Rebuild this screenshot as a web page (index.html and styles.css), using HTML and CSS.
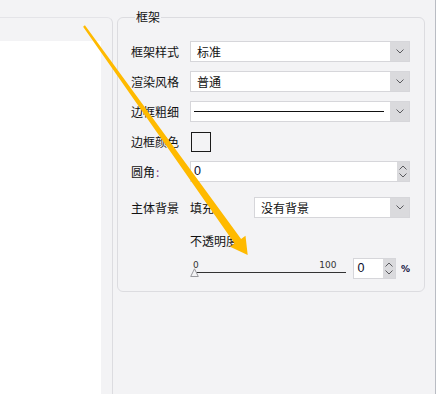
FILE: index.html
```html
<!DOCTYPE html>
<html lang="zh">
<head>
<meta charset="utf-8">
<title>框架</title>
<link rel="stylesheet" href="styles.css">
</head>
<body>
<div class="app">
  <div class="left-pane"><div class="left-white"></div></div>
  <div class="right-pane">
    <fieldset class="group">
      <legend class="group-title">框架</legend>
      <div class="row">
        <span class="lbl">框架样式</span>
        <div class="select wide"><span class="val">标准</span><span class="drop"><svg class="chev" width="8" height="5" viewBox="0 0 8 5"><polyline points="0.5,0.5 4,4 7.5,0.5"/></svg></span></div>
      </div>
      <div class="row gap9">
        <span class="lbl">渲染风格</span>
        <div class="select wide"><span class="val">普通</span><span class="drop"><svg class="chev" width="8" height="5" viewBox="0 0 8 5"><polyline points="0.5,0.5 4,4 7.5,0.5"/></svg></span></div>
      </div>
      <div class="row gap9">
        <span class="lbl">边框粗细</span>
        <div class="select wide"><span class="val line-val"><span class="line-sample"></span></span><span class="drop"><svg class="chev" width="8" height="5" viewBox="0 0 8 5"><polyline points="0.5,0.5 4,4 7.5,0.5"/></svg></span></div>
      </div>
      <div class="row gap9">
        <span class="lbl">边框颜色</span>
        <span class="swatch"></span>
      </div>
      <div class="row gap9">
        <span class="lbl">圆角<span class="colon">:</span></span>
        <div class="spin wide"><span class="val num">0</span><span class="spin-btns"><svg class="chev" width="8" height="5" viewBox="0 0 8 5"><polyline points="0.5,4.5 4,1 7.5,4.5"/></svg><svg class="chev" width="8" height="5" viewBox="0 0 8 5"><polyline points="0.5,0.5 4,4 7.5,0.5"/></svg></span></div>
      </div>
      <div class="row gap15">
        <span class="lbl">主体背景</span>
        <span class="sub-lbl">填充</span>
        <div class="select narrow"><span class="val">没有背景</span><span class="drop"><svg class="chev" width="8" height="5" viewBox="0 0 8 5"><polyline points="0.5,0.5 4,4 7.5,0.5"/></svg></span></div>
      </div>
      <div class="opacity-title">不透明度</div>
      <div class="slider-row">
        <div class="slider">
          <div class="ticks"><span>0</span><span>100</span></div>
          <div class="track"></div>
          <svg class="handle" width="9" height="9" viewBox="0 0 9 9"><polygon points="4.5,0.8 8.3,8.5 0.7,8.5"/></svg>
        </div>
        <div class="spin small"><span class="val num">0</span><span class="spin-btns"><svg class="chev" width="8" height="5" viewBox="0 0 8 5"><polyline points="0.5,4.5 4,1 7.5,4.5"/></svg><svg class="chev" width="8" height="5" viewBox="0 0 8 5"><polyline points="0.5,0.5 4,4 7.5,0.5"/></svg></span></div>
        <span class="pct">%</span>
      </div>
    </fieldset>
  </div>
  <div class="edge"></div>
</div>
<svg class="arrow" width="436" height="394" viewBox="0 0 436 394">
  <polygon points="84.9,25.3 241.1,238.9 245.5,235.7 247.7,255 230.1,246.7 234.6,243.5 83.1,26.7"/>
</svg>
</body>
</html>
```

FILE: styles.css
```css
* { box-sizing: border-box; }
html, body { margin: 0; padding: 0; }
body {
  width: 436px;
  height: 394px;
  overflow: hidden;
  background: #f3f3f5;
  font-family: "Noto Sans CJK SC", "Noto Sans", sans-serif;
  font-size: 12px;
  color: #111;
  position: relative;
}
.app {
  display: flex;
  height: 394px;
}
.left-pane {
  width: 113px;
  margin-top: 17px;
  border-top: 1px solid #e4e4e8;
  border-right: 1px solid #dcdce0;
  border-top-right-radius: 6px;
  padding-top: 23px;
  display: flex;
  flex-direction: column;
}
.left-white {
  width: 101px;
  flex: 1;
  background: #ffffff;
}
.right-pane {
  width: 322px;
  padding-left: 4px;
}
.edge {
  width: 1px;
  background: #b9bcc3;
}
.group {
  width: 308px;
  margin: 8px 0 0 0;
  padding: 15px 14px 12px 13px;
  border: 1px solid #dcdce0;
  border-radius: 6px;
  min-width: 0;
}
.group-title {
  margin-left: 4px;
  padding: 0 1px;
  line-height: 18px;
  font-size: 12px;
  color: #111;
}
.row {
  display: flex;
  align-items: center;
  height: 21px;
}
.gap9 { margin-top: 9px; }
.gap15 { margin-top: 15px; }
.lbl {
  width: 59px;
  flex: none;
  line-height: 21px;
  white-space: nowrap;
}
.colon { color: #8b3f8b; margin-left: 1px; }
.sub-lbl {
  width: 64px;
  flex: none;
  line-height: 21px;
}
.select, .spin {
  display: flex;
  height: 21px;
  background: #fff;
  border: 1px solid #d6d6da;
}
.wide { width: 220px; }
.narrow { width: 156px; }
.val {
  flex: 1;
  padding-left: 6px;
  line-height: 19px;
  white-space: nowrap;
}
.num {
  padding-left: 3px;
  font-family: "Liberation Sans", Arial, sans-serif;
  font-size: 12.5px;
  color: #0b0b2a;
}
.line-val {
  display: flex;
  align-items: center;
  padding-left: 3px;
  padding-right: 6px;
}
.line-sample {
  flex: 1;
  height: 1px;
  background: #111;
}
.drop {
  width: 19px;
  flex: none;
  background: #dadadd;
  display: flex;
  align-items: center;
  justify-content: center;
}
.chev polyline {
  fill: none;
  stroke: #5a5a5e;
  stroke-width: 1;
}
.spin-btns {
  width: 12px;
  flex: none;
  background: #dadadd;
  display: flex;
  flex-direction: column;
  align-items: center;
  justify-content: center;
  gap: 3px;
}
.swatch {
  width: 20px;
  height: 20px;
  margin-left: 1px;
  margin-top: 1px;
  border: 1px solid #1a1a1a;
  background: #f3f3f5;
}
.opacity-title {
  margin-top: 14px;
  margin-left: 59px;
  line-height: 18px;
  height: 18px;
}
.slider-row {
  display: flex;
  align-items: center;
  height: 21px;
  margin-top: 8px;
  margin-left: 59px;
}
.slider {
  position: relative;
  width: 158px;
  height: 21px;
}
.ticks {
  display: flex;
  justify-content: space-between;
  padding-left: 3px;
  padding-right: 10px;
  font-family: "DejaVu Sans", sans-serif;
  font-size: 9px;
  line-height: 10px;
  color: #333;
  padding-top: 2px;
}
.track {
  margin-left: 3px;
  margin-top: 2px;
  height: 1px;
  background: #333;
}
.handle {
  position: absolute;
  left: 0;
  top: 10px;
}
.handle polygon {
  fill: #f3f3f5;
  stroke: #9a9a9e;
  stroke-width: 1;
}
.spin.small {
  width: 43px;
  margin-left: 7px;
}
.pct {
  margin-left: 5px;
  font-family: "DejaVu Sans", sans-serif;
  font-size: 9px;
  font-weight: bold;
  color: #101040;
}
.arrow {
  position: absolute;
  left: 0;
  top: 0;
  pointer-events: none;
}
.arrow polygon {
  fill: #ffba00;
}
```
